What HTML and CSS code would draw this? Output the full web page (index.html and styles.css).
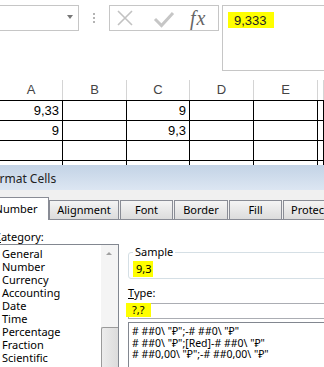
FILE: index.html
```html
<!DOCTYPE html>
<html>
<head>
<meta charset="utf-8">
<link rel="stylesheet" href="styles.css">
</head>
<body>
<div class="bar">
  <div class="namebox"><span class="dd"></span></div>
  <div class="dots"><i></i><i></i><i></i></div>
  <div class="fxbtns">
    <svg class="btnicons" width="72" height="24" viewBox="0 0 72 24">
      <path d="M8 5 L22 19 M22 5 L8 19" stroke="#c2c2c2" stroke-width="1.6" fill="none"/>
      <path d="M45 13 L51.5 19.5 L63 7" stroke="#c6c6c6" stroke-width="3" fill="none"/>
    </svg>
    <span class="fx">fx</span>
  </div>
  <div class="formula"><span class="hl hl-f">9,333</span></div>
</div>

<div class="sheet">
  <div class="row hdr"><div>A</div><div>B</div><div>C</div><div>D</div><div>E</div><div></div></div>
  <div class="row"><div>9,33</div><div></div><div>9</div><div></div><div></div><div></div></div>
  <div class="row"><div>9</div><div></div><div>9,3</div><div></div><div></div><div></div></div>
  <div class="row"><div></div><div></div><div></div><div></div><div></div><div></div></div>
  <div class="row part"><div></div><div></div><div></div><div></div><div></div><div></div></div>
</div>

<div class="dlg">
  <div class="title"><span>Format Cells</span></div>
  <div class="tabs">
    <div class="tab sel">Number</div>
    <div class="tab w-al">Alignment</div>
    <div class="tab w-fo">Font</div>
    <div class="tab w-bo">Border</div>
    <div class="tab w-fi">Fill</div>
    <div class="tab w-pr">Protection</div>
  </div>
  <div class="panel">
    <div class="left">
      <div class="lbl cat"><u>C</u>ategory:</div>
      <div class="catlist">
        <ul class="items">
          <li>General</li>
          <li>Number</li>
          <li>Currency</li>
          <li>Accounting</li>
          <li>Date</li>
          <li>Time</li>
          <li>Percentage</li>
          <li>Fraction</li>
          <li>Scientific</li>
          <li>Text</li>
        </ul>
        <div class="sb"><div class="sbup"><span class="arr"></span></div><div class="sbthumb"></div></div>
      </div>
    </div>
    <div class="right">
      <fieldset class="sample">
        <legend>Sample</legend>
        <span class="hl hl-s">9,3</span>
      </fieldset>
      <div class="lbl type"><u>T</u>ype:</div>
      <div class="typebox"><span class="hl hl-t">?,?</span></div>
      <ul class="fmtlist">
        <li># ##0\ "₽";-# ##0\ "₽"</li>
        <li># ##0\ "₽";[Red]-# ##0\ "₽"</li>
        <li># ##0,00\ "₽";-# ##0,00\ "₽"</li>
      </ul>
    </div>
  </div>
</div>
</body>
</html>
```

FILE: styles.css
```css
html, body {
  margin: 0;
  padding: 0;
}
body {
  width: 324px;
  height: 367px;
  overflow: hidden;
  background: #fff;
  font-family: "Noto Sans", "DejaVu Sans", sans-serif;
  color: #000;
}

/* formula bar */
.bar {
  display: flex;
  align-items: flex-start;
  height: 80px;
}
.namebox {
  box-sizing: border-box;
  margin-top: 5px;
  margin-left: -2px;
  width: 81px;
  height: 26px;
  border: 1px solid #c6c6c6;
  display: flex;
  align-items: center;
  justify-content: flex-end;
  padding-right: 5px;
}
.dd {
  width: 0;
  height: 0;
  border-left: 3.5px solid transparent;
  border-right: 3.5px solid transparent;
  border-top: 4px solid #777;
  margin-top: -2px;
}
.dots {
  width: 30px;
  margin-top: 13px;
  display: flex;
  flex-direction: column;
  align-items: center;
  gap: 2px;
}
.dots i {
  display: block;
  width: 2px;
  height: 2px;
  background: #b4b4b4;
}
.fxbtns {
  box-sizing: border-box;
  margin-top: 5px;
  width: 110px;
  height: 26px;
  border: 1px solid #c6c6c6;
  display: flex;
  align-items: center;
}
.btnicons {
  display: block;
}
.fx {
  margin-left: 8px;
  font-family: "Liberation Serif", "DejaVu Serif", serif;
  font-style: italic;
  font-size: 20px;
  line-height: 24px;
  color: #666;
  letter-spacing: 1px;
}
.formula {
  box-sizing: border-box;
  flex: 1;
  margin-left: 3px;
  margin-top: 5px;
  height: 66px;
  border: 1px solid #c6c6c6;
  border-right: none;
  padding: 2px 0 0 5px;
}
.hl {
  display: inline-block;
  background: #ffff00;
}
.hl-f {
  height: 16px;
  line-height: 17px;
  padding: 0 7px 0 6px;
  font-family: "Liberation Sans", Arial, sans-serif;
  font-size: 13px;
  color: #222;
}

/* sheet */
.row {
  display: grid;
  grid-template-columns: 63px 64px 63px 64px 64px 1fr;
  height: 20px;
  box-sizing: border-box;
  border-bottom: 1px solid #000;
}
.row > div {
  border-right: 1px solid #000;
  text-align: right;
  padding-right: 3px;
  font-family: "Liberation Sans", Arial, sans-serif;
  font-size: 13px;
  line-height: 20px;
  color: #000;
}
.row.hdr {
  height: 21px;
}
.row.hdr > div {
  border-right-color: #d4d4d4;
  text-align: center;
  padding-right: 0;
  color: #444;
  line-height: 20px;
}
.row.part {
  height: 4px;
  border-bottom: none;
}

/* dialog */
.dlg {
  background: #f0f0f0;
  height: 202px;
}
.title {
  height: 25px;
  background: linear-gradient(#c3d3e6, #dce6f2);
  font-size: 12px;
  line-height: 27px;
  color: #222;
  text-indent: -14px;
  white-space: nowrap;
  overflow: hidden;
}
.tabs {
  display: flex;
  align-items: flex-end;
  height: 22px;
  margin-top: 7px;
  margin-left: -12px;
  gap: 1px;
  white-space: nowrap;
  font-size: 11px;
}
.tab {
  box-sizing: border-box;
  flex: none;
  height: 19px;
  border: 1px solid #898c95;
  border-bottom: none;
  background: linear-gradient(#f4f4f4, #dcdcdc);
  text-align: center;
  line-height: 18px;
  overflow: hidden;
}
.tab.sel {
  position: relative;
  z-index: 1;
  width: 61px;
  height: 23px;
  margin-bottom: -1px;
  background: #fff;
  line-height: 22px;
  text-indent: -5px;
  margin-right: -1px;
}
.w-al { width: 70px; }
.w-fo { width: 53px; }
.w-bo { width: 54px; }
.w-fi { width: 53px; }
.w-pr { width: 70px; text-align: left; padding-left: 7px; }

.panel {
  background: #fff;
  border-top: 1px solid #898c95;
  display: flex;
  height: 150px;
  font-size: 11px;
}
.left {
  width: 119px;
  flex: none;
}
.lbl {
  line-height: 13px;
  white-space: nowrap;
}
.lbl.cat {
  margin-top: 10px;
  text-indent: -6px;
}
.catlist {
  box-sizing: border-box;
  margin-top: 1px;
  margin-left: -2px;
  width: 121px;
  height: 140px;
  border: 1px solid #828790;
  display: flex;
}
.items {
  list-style: none;
  margin: 0;
  padding: 2px 0 0 3px;
  flex: 1;
}
.items li {
  line-height: 13px;
  height: 13px;
}
.sb {
  width: 17px;
  background: #f4f4f4;
  display: flex;
  flex-direction: column;
}
.sbup {
  height: 17px;
  display: flex;
  align-items: center;
  justify-content: center;
}
.arr {
  width: 0;
  height: 0;
  border-left: 3px solid transparent;
  border-right: 3px solid transparent;
  border-bottom: 3px solid #a0a0a0;
  margin-left: -1px;
}
.sbthumb {
  margin-top: 65px;
  flex: 1;
  box-sizing: border-box;
  border: 1px solid #9a9a9a;
  border-right: none;
  border-radius: 2px 0 0 2px;
  background: linear-gradient(90deg, #ececec, #dcdcdc);
}
.right {
  flex: 1;
  margin-left: 9px;
  margin-right: -10px;
}
.sample {
  margin: 25px 0 0 0;
  padding: 0 0 1px 4px;
  border: 1px solid #d5dfe5;
  border-radius: 3px;
}
.sample legend {
  padding: 0 2px;
  line-height: 14px;
  color: #000;
}
.hl-s {
  margin-top: 2px;
  height: 16px;
  line-height: 16px;
  padding: 0 3px;
  width: 20px;
  box-sizing: border-box;
  vertical-align: top;
}
.lbl.type {
  margin-top: 7px;
}
.typebox {
  box-sizing: border-box;
  margin-top: 4px;
  height: 16px;
  border: 1px solid #abadb3;
}
.hl-t {
  margin: -1px 0 0 -3px;
  height: 14px;
  line-height: 14px;
  padding: 0 6px 0 6px;
  vertical-align: top;
}
.fmtlist {
  list-style: none;
  box-sizing: border-box;
  margin: 3px 0 0 0;
  padding: 3px 0 0 3px;
  height: 60px;
  border: 1px solid #828790;
  white-space: nowrap;
  font-size: 10.5px;
}
.fmtlist li {
  line-height: 11.5px;
  height: 11.5px;
}
```
